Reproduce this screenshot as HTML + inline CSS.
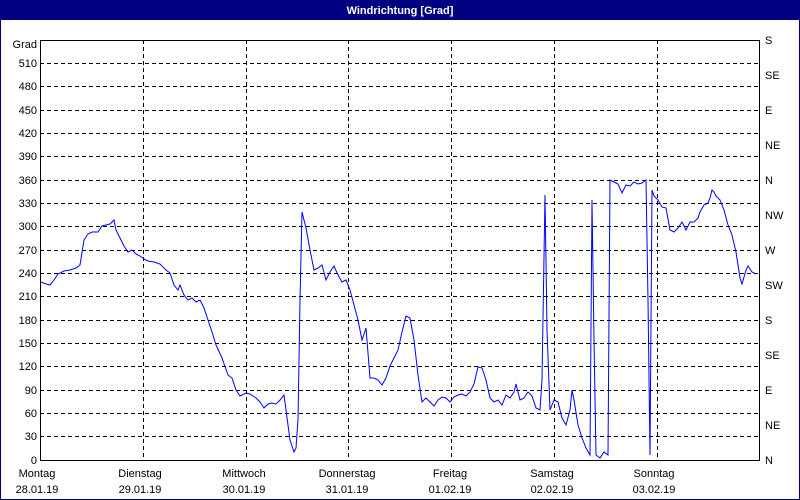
<!DOCTYPE html>
<html><head><meta charset="utf-8"><style>
body{margin:0;width:800px;height:500px;overflow:hidden;background:#fff}
svg{display:block}
text{font-family:"Liberation Sans",sans-serif;font-size:11px;fill:#000}
</style></head><body>
<svg width="800" height="500" xmlns="http://www.w3.org/2000/svg">
<rect x="0" y="0" width="800" height="500" fill="#fff"/>
<rect x="0" y="0" width="800" height="20" fill="#000080"/>
<rect x="0.5" y="0.5" width="799" height="499" fill="none" stroke="#000080"/>
<text x="400" y="14" text-anchor="middle" style="fill:#fff;font-weight:bold">Windrichtung [Grad]</text>
<g stroke="#000" stroke-dasharray="4,3" stroke-width="1" shape-rendering="crispEdges">
<line x1="40" x2="760" y1="63.5" y2="63.5"/><line x1="40" x2="760" y1="86.5" y2="86.5"/><line x1="40" x2="760" y1="110.5" y2="110.5"/><line x1="40" x2="760" y1="133.5" y2="133.5"/><line x1="40" x2="760" y1="156.5" y2="156.5"/><line x1="40" x2="760" y1="180.5" y2="180.5"/><line x1="40" x2="760" y1="203.5" y2="203.5"/><line x1="40" x2="760" y1="226.5" y2="226.5"/><line x1="40" x2="760" y1="250.5" y2="250.5"/><line x1="40" x2="760" y1="273.5" y2="273.5"/><line x1="40" x2="760" y1="296.5" y2="296.5"/><line x1="40" x2="760" y1="320.5" y2="320.5"/><line x1="40" x2="760" y1="343.5" y2="343.5"/><line x1="40" x2="760" y1="366.5" y2="366.5"/><line x1="40" x2="760" y1="390.5" y2="390.5"/><line x1="40" x2="760" y1="413.5" y2="413.5"/><line x1="40" x2="760" y1="436.5" y2="436.5"/>
<line y1="40" y2="460" x1="143.5" x2="143.5"/><line y1="40" y2="460" x1="246.5" x2="246.5"/><line y1="40" y2="460" x1="348.5" x2="348.5"/><line y1="40" y2="460" x1="451.5" x2="451.5"/><line y1="40" y2="460" x1="554.5" x2="554.5"/><line y1="40" y2="460" x1="657.5" x2="657.5"/>
</g>
<rect x="40.5" y="40.5" width="719" height="420" fill="none" stroke="#000" shape-rendering="crispEdges"/>
<g text-anchor="end">
<text x="37" y="48">Grad</text><text x="37" y="67">510</text><text x="37" y="90">480</text><text x="37" y="114">450</text><text x="37" y="137">420</text><text x="37" y="160">390</text><text x="37" y="184">360</text><text x="37" y="207">330</text><text x="37" y="230">300</text><text x="37" y="254">270</text><text x="37" y="277">240</text><text x="37" y="300">210</text><text x="37" y="324">180</text><text x="37" y="347">150</text><text x="37" y="370">120</text><text x="37" y="394">90</text><text x="37" y="417">60</text><text x="37" y="440">30</text><text x="37" y="464">0</text>
</g>
<g>
<text x="765" y="44">S</text><text x="765" y="79">SE</text><text x="765" y="114">E</text><text x="765" y="149">NE</text><text x="765" y="184">N</text><text x="765" y="219">NW</text><text x="765" y="254">W</text><text x="765" y="289">SW</text><text x="765" y="324">S</text><text x="765" y="359">SE</text><text x="765" y="394">E</text><text x="765" y="429">NE</text><text x="765" y="464">N</text>
</g>
<g text-anchor="middle">
<text x="37" y="477">Montag</text><text x="37" y="493">28.01.19</text>
<text x="140" y="477">Dienstag</text><text x="140" y="493">29.01.19</text>
<text x="244" y="477">Mittwoch</text><text x="244" y="493">30.01.19</text>
<text x="347" y="477">Donnerstag</text><text x="347" y="493">31.01.19</text>
<text x="450" y="477">Freitag</text><text x="450" y="493">01.02.19</text>
<text x="552" y="477">Samstag</text><text x="552" y="493">02.02.19</text>
<text x="654" y="477">Sonntag</text><text x="654" y="493">03.02.19</text>
</g>
<polyline fill="none" stroke="#0000ff" stroke-width="1" points="41,282 46,284 50,285 54,280 58,274 64,271 70,270 76,268 80,265 84,240 88,234 92,232 98,232 102,226 106,225 110,224 114,220 116,230 120,238 124,246 128,252 132,250 136,254 140,256 144,259 148,261 154,262 160,264 166,270 170,273 174,285 178,290 180,285 184,295 188,300 192,298 196,302 200,300 204,308 208,320 212,332 216,345 222,358 228,375 232,378 236,390 240,396 246,393 250,394 256,398 260,402 264,408 268,404 272,403 276,404 280,400 284,395 286,410 290,440 294,452 296,448 298,420 300,300 302,212 306,228 310,250 314,270 318,268 322,265 326,280 330,272 334,266 338,275 342,282 346,280 350,290 354,305 358,320 362,340 366,328 370,378 374,378 378,380 382,385 386,378 390,366 394,358 398,350 402,332 406,316 410,318 414,340 418,375 422,402 426,398 430,402 434,406 438,400 442,397 446,398 450,402 454,397 458,395 462,394 466,396 470,392 474,384 478,367 482,368 486,380 490,398 494,402 498,400 502,405 506,395 510,398 514,392 516,384 520,400 524,398 528,392 532,396 536,408 540,410 542,380 545,195 547,330 550,410 554,400 558,402 562,418 566,425 570,410 572,390 574,400 578,425 582,438 586,448 590,455 592,200 594,340 596,455 600,458 604,452 608,455 610,180 614,182 618,184 622,193 626,185 630,186 634,182 638,184 642,183 646,180 648,300 650,455 652,190 654,196 658,200 662,207 666,208 670,230 674,232 678,228 682,222 686,230 690,222 694,222 698,218 700,212 704,205 708,203 710,198 712,190 714,192 716,196 720,200 724,210 728,225 732,235 736,252 740,278 742,284 746,270 748,266 752,272 756,274"/>
</svg>
</body></html>
